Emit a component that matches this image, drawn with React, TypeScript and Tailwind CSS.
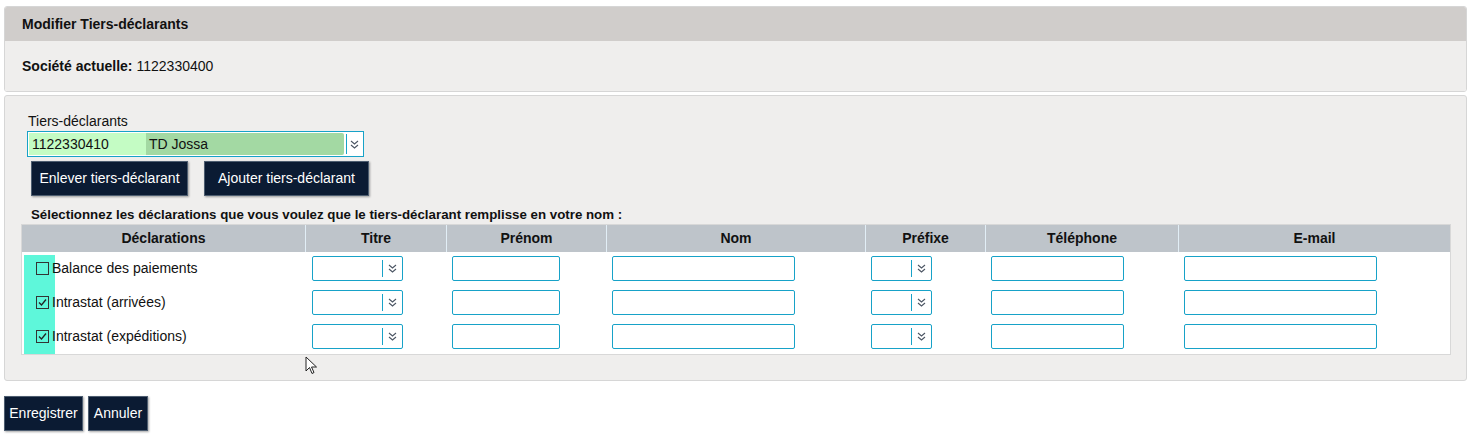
import React from "react";

const font = { fontFamily: '"Liberation Sans", Arial, sans-serif' };

const columns = [
  { label: "Déclarations", w: "w-[283px]" },
  { label: "Titre", w: "w-[141px]" },
  { label: "Prénom", w: "w-[160px]" },
  { label: "Nom", w: "w-[259px]" },
  { label: "Préfixe", w: "w-[120px]" },
  { label: "Téléphone", w: "w-[193px]" },
  { label: "E-mail", w: "w-[272px]" },
];

const rows = [
  { label: "Balance des paiements", checked: false },
  { label: "Intrastat (arrivées)", checked: true },
  { label: "Intrastat (expéditions)", checked: true },
];

function Chevrons() {
  return (
    <svg width="9" height="11" viewBox="0 0 9 11" fill="none" stroke="#4b5563" strokeWidth="1.1">
      <polyline points="1,2 4.5,5 8,2" />
      <polyline points="1,6 4.5,9 8,6" />
    </svg>
  );
}

function SmallSelect({ width }: { width: string }) {
  return (
    <div className={`${width} h-[25px] border border-[#17a2c8] rounded-[2px] bg-white flex`}>
      <div className="flex-1" />
      <div className="w-px bg-[#17a2c8] my-[3px]" />
      <div className="w-[19px] flex items-center justify-center">
        <Chevrons />
      </div>
    </div>
  );
}

function TextInput({ width }: { width: string }) {
  return <div className={`${width} h-[25px] border border-[#17a2c8] rounded-[2px] bg-white`} />;
}

function Checkbox({ checked }: { checked: boolean }) {
  return (
    <span className="w-[13px] h-[13px] border border-[#333] flex items-center justify-center shrink-0">
      {checked && (
        <svg width="11" height="11" viewBox="0 0 11 11" fill="none" stroke="#222" strokeWidth="1.3">
          <polyline points="2,5.5 4.5,8 9,2.5" />
        </svg>
      )}
    </span>
  );
}

function DarkButton({ children, className = "" }: { children: React.ReactNode; className?: string }) {
  return (
    <button
      className={`h-[35px] bg-[#0b1b33] border border-[#4d5d70] text-white text-[14px] shadow-[1px_1px_2px_rgba(0,0,0,0.35)] ${className}`}
    >
      {children}
    </button>
  );
}

export default function App() {
  return (
    <div className="w-[1472px] h-[442px] bg-white relative text-[#111]" style={font}>
      <div className="pt-[6px] pl-[4px]">
        {/* Panneau société */}
        <div className="w-[1463px] border border-[#d6d6d6] rounded-[3px] overflow-hidden">
          <div className="h-[34px] bg-[#d0cdcb] px-[17px] flex items-center text-[14px] font-bold">
            Modifier Tiers-déclarants
          </div>
          <div className="h-[50px] bg-[#efeeed] px-[17px] flex items-center text-[14px]">
            <span className="font-bold">Société actuelle:</span>
            <span className="ml-[4px]">1122330400</span>
          </div>
        </div>

        {/* Panneau tiers-déclarants */}
        <div className="mt-[3px] w-[1463px] h-[286px] border border-[#d6d6d6] rounded-[3px] bg-[#efeeed] pl-[17px] pt-[17px]">
          <div className="pl-[6px] text-[14px] leading-[17px]">Tiers-déclarants</div>
          <div className="ml-[5px] mt-px w-[337px] h-[26px] border border-[#17a2c8] bg-white flex p-px">
            <div className="w-[117px] bg-[#c4fcc4] pl-[3px] text-[14px] leading-[22px]">1122330410</div>
            <div className="w-[198px] bg-[#a3d9a3] rounded-r-[2px] pl-[3px] text-[14px] leading-[22px]">TD Jossa</div>
            <div className="w-px bg-[#17a2c8] ml-[2px] my-[1px]" />
            <div className="flex-1 flex items-center justify-center">
              <Chevrons />
            </div>
          </div>
          <div className="flex gap-[16px] ml-[9px] mt-[4px]">
            <DarkButton className="w-[157px]">Enlever tiers-déclarant</DarkButton>
            <DarkButton className="w-[165px]">Ajouter tiers-déclarant</DarkButton>
          </div>
          <div className="ml-[9px] mt-[10px] text-[13.3px] font-bold leading-[17px]">
            Sélectionnez les déclarations que vous voulez que le tiers-déclarant remplisse en votre nom :
          </div>

          <div className="mt-px -ml-px w-[1430px] border border-[#d8d8d8] bg-white">
            <div className="flex h-[27px] bg-[#bec4ca]">
              {columns.map((c, i) => (
                <div
                  key={c.label}
                  className={`${c.w} flex items-center justify-center text-[14px] font-bold ${i > 0 ? "border-l border-[#e2eef6]" : ""}`}
                >
                  {c.label}
                </div>
              ))}
            </div>
            <div className="relative">
              <div className="absolute left-[2px] top-[3px] bottom-0 w-[31px] bg-[#5ef7da]" />
              {rows.map((r) => (
                <div key={r.label} className="flex h-[34px] items-center relative pb-[2px]">
                  <div className="w-[283px] flex items-center pl-[14px] text-[14px] gap-[3px]">
                    <Checkbox checked={r.checked} />
                    <span>{r.label}</span>
                  </div>
                  <div className="w-[141px] pl-[7px]"><SmallSelect width="w-[91px]" /></div>
                  <div className="w-[160px] pl-[6px]"><TextInput width="w-[108px]" /></div>
                  <div className="w-[259px] pl-[6px]"><TextInput width="w-[183px]" /></div>
                  <div className="w-[120px] pl-[6px]"><SmallSelect width="w-[61px]" /></div>
                  <div className="w-[193px] pl-[6px]"><TextInput width="w-[133px]" /></div>
                  <div className="w-[272px] pl-[6px]"><TextInput width="w-[193px]" /></div>
                </div>
              ))}
            </div>
          </div>
        </div>

        <div className="flex gap-[5px] mt-[15px]">
          <DarkButton className="w-[79px]">Enregistrer</DarkButton>
          <DarkButton className="w-[60px]">Annuler</DarkButton>
        </div>
      </div>

      {/* curseur */}
      <svg className="absolute left-[305px] top-[356px]" width="14" height="20" viewBox="0 0 14 20">
        <path d="M1 1 L1 15 L4.5 11.5 L7 17.5 L9 16.5 L6.5 11 L11.5 11 Z" fill="#fff" stroke="#222" strokeWidth="1" strokeLinejoin="round" />
      </svg>
    </div>
  );
}
